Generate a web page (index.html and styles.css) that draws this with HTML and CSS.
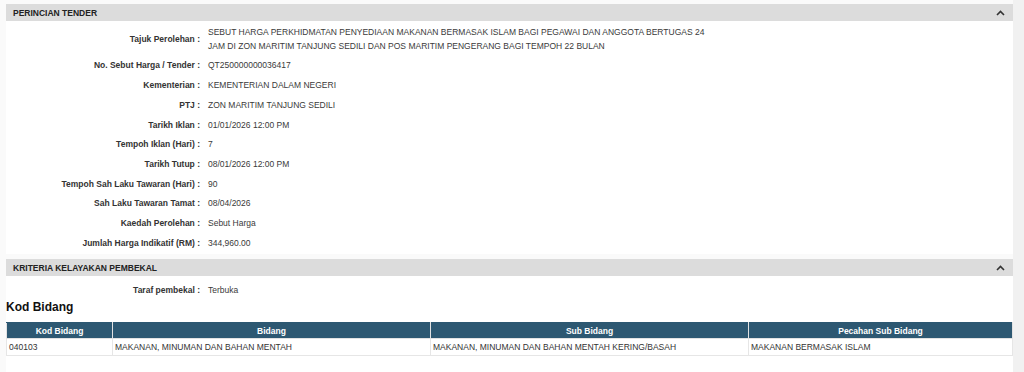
FILE: index.html
```html
<!DOCTYPE html>
<html lang="ms">

<head>
    <meta charset="utf8">
    <title>Perincian Tender</title>

    <link rel="stylesheet" href="styles.css">
</head>

<body>
    <div class="page">
        <div class="content">
            <section class="panel">
                <div class="panel-heading">
                    <span>PERINCIAN TENDER</span>
                    <svg class="chevron" width="9" height="6" viewBox="0 0 9 6">
                        <path d="M1 5 L4.5 1.5 L8 5" fill="none" stroke="#333" stroke-width="1.6" />
                    </svg>
                </div>
                <div class="panel-body">
                    <div class="row">
                        <div class="label">Tajuk Perolehan :</div>
                        <div class="value wide">SEBUT HARGA PERKHIDMATAN PENYEDIAAN MAKANAN BERMASAK ISLAM BAGI PEGAWAI DAN ANGGOTA BERTUGAS 24 JAM DI ZON MARITIM TANJUNG SEDILI DAN POS MARITIM PENGERANG BAGI TEMPOH 22 BULAN</div>
                    </div>
                    <div class="row">
                        <div class="label">No. Sebut Harga / Tender :</div>
                        <div class="value">QT250000000036417</div>
                    </div>
                    <div class="row">
                        <div class="label">Kementerian :</div>
                        <div class="value">KEMENTERIAN DALAM NEGERI</div>
                    </div>
                    <div class="row">
                        <div class="label">PTJ :</div>
                        <div class="value">ZON MARITIM TANJUNG SEDILI</div>
                    </div>
                    <div class="row">
                        <div class="label">Tarikh Iklan :</div>
                        <div class="value">01/01/2026 12:00 PM</div>
                    </div>
                    <div class="row">
                        <div class="label">Tempoh Iklan (Hari) :</div>
                        <div class="value">7</div>
                    </div>
                    <div class="row">
                        <div class="label">Tarikh Tutup :</div>
                        <div class="value">08/01/2026 12:00 PM</div>
                    </div>
                    <div class="row">
                        <div class="label">Tempoh Sah Laku Tawaran (Hari) :</div>
                        <div class="value">90</div>
                    </div>
                    <div class="row">
                        <div class="label">Sah Laku Tawaran Tamat :</div>
                        <div class="value">08/04/2026</div>
                    </div>
                    <div class="row">
                        <div class="label">Kaedah Perolehan :</div>
                        <div class="value">Sebut Harga</div>
                    </div>
                    <div class="row">
                        <div class="label">Jumlah Harga Indikatif (RM) :</div>
                        <div class="value">344,960.00</div>
                    </div>
                </div>
            </section>

            <section class="panel">
                <div class="panel-heading">
                    <span>KRITERIA KELAYAKAN PEMBEKAL</span>
                    <svg class="chevron" width="9" height="6" viewBox="0 0 9 6">
                        <path d="M1 5 L4.5 1.5 L8 5" fill="none" stroke="#333" stroke-width="1.6" />
                    </svg>
                </div>
                <div class="panel-body kriteria">
                    <div class="row">
                        <div class="label">Taraf pembekal :</div>
                        <div class="value">Terbuka</div>
                    </div>
                    <h4>Kod Bidang</h4>
                    <table class="bidang">
                        <thead>
                            <tr>
                                <th class="col-kod">Kod Bidang</th>
                                <th class="col-bidang">Bidang</th>
                                <th class="col-sub">Sub Bidang</th>
                                <th>Pecahan Sub Bidang</th>
                            </tr>
                        </thead>
                        <tbody>
                            <tr>
                                <td>040103</td>
                                <td>MAKANAN, MINUMAN DAN BAHAN MENTAH</td>
                                <td>MAKANAN, MINUMAN DAN BAHAN MENTAH KERING/BASAH</td>
                                <td>MAKANAN BERMASAK ISLAM</td>
                            </tr>
                        </tbody>
                    </table>
                </div>
            </section>
        </div>
        <div class="scroll-track"></div>
    </div>
</body>

</html>
```

FILE: styles.css
```css
* {
    box-sizing: border-box;
}

body {
    font-family: "Liberation Sans", Arial, sans-serif;
    font-size: 8.5px;
    color: #333;
    margin: 0;
    width: 100vw;
    height: 100vh;
    background-color: #fafafa;
}

.page {
    display: flex;
    height: 100%;
    overflow: hidden;
}

.content {
    flex-grow: 1;
    padding: 4px 0 0 6px;
}

.scroll-track {
    width: 11px;
    background-color: #f1f1f1;
}

.panel {
    background-color: white;
    margin-bottom: 5px;
}

.panel-heading {
    display: flex;
    justify-content: space-between;
    align-items: center;
    height: 17px;
    padding: 0 8px 0 7px;
    background-color: #dcdcdc;
    font-weight: bold;
    color: #222;
}

.panel-body {
    padding: 2px 0 1px 0;
}

.panel-body.kriteria {
    padding: 5px 0 20px 0;
}

.row {
    display: grid;
    grid-template-columns: 194px 1fr;
    column-gap: 8px;
    align-items: center;
    padding: 3px 0;
    line-height: 13.7px;
}

.kriteria .row {
    padding-bottom: 1px;
}

.row .label {
    text-align: right;
    font-weight: bold;
    color: #333;
}

.row .value {
    color: #3a3a3a;
}

.row .value.wide {
    max-width: 505px;
}

h4 {
    margin: 0;
    font-size: 12px;
    line-height: 16px;
    color: #111;
}

table.bidang {
    width: 100%;
    margin-top: 7px;
    border-collapse: collapse;
}

table.bidang th {
    background-color: #2d5872;
    color: white;
    font-weight: bold;
    height: 16px;
    padding: 0 2px;
    border: 1px solid #e2e2e2;
    border-top-color: #2d5872;
}

table.bidang td {
    height: 17px;
    padding: 0 2px;
    border: 1px solid #e6e6e6;
    text-align: left;
}

table.bidang th.col-kod {
    width: 106px;
}

table.bidang th.col-bidang,
table.bidang th.col-sub {
    width: 318px;
}
```
